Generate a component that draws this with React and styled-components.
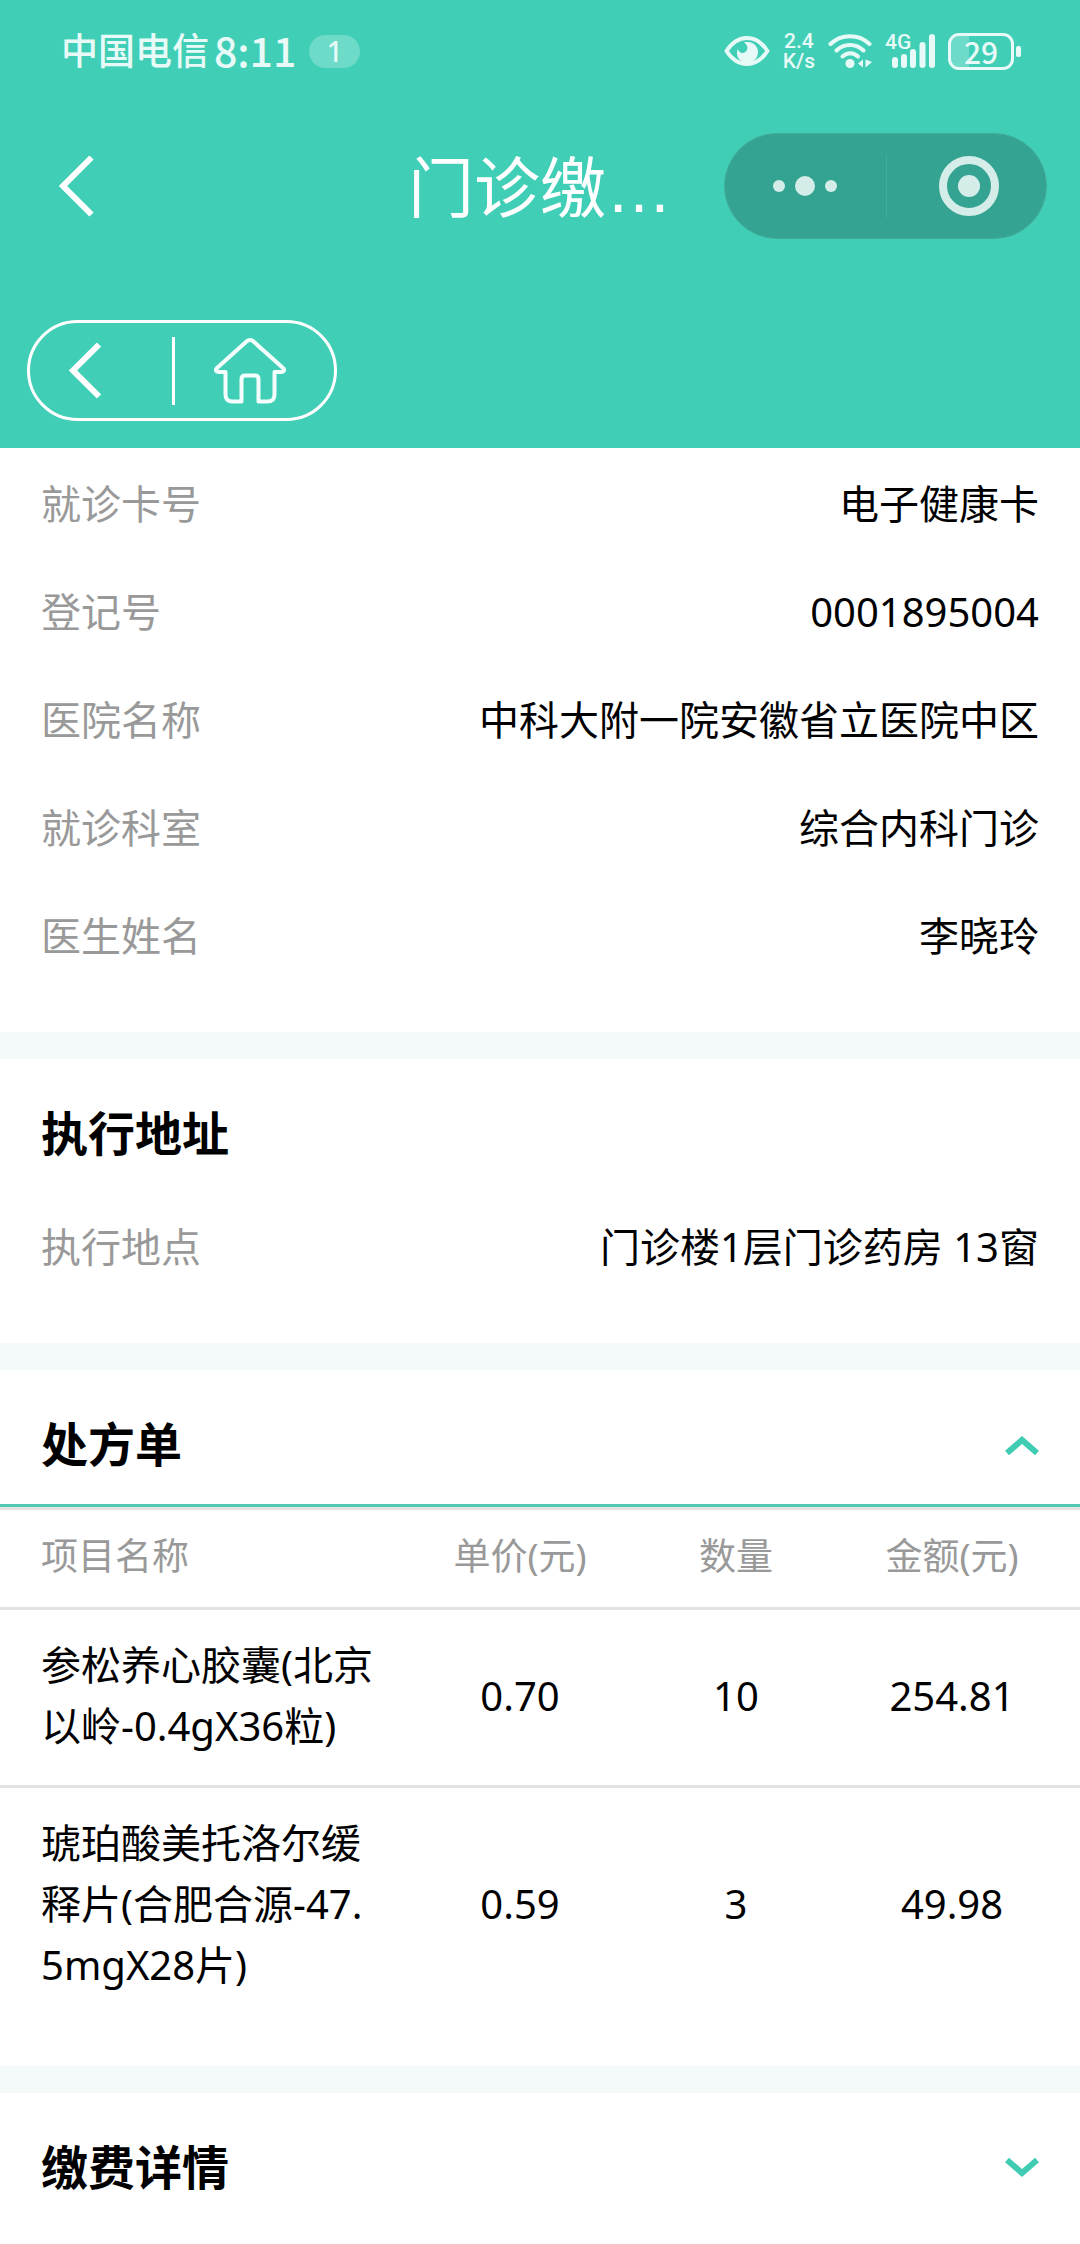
import React, {useState} from "react";
import styled, {createGlobalStyle} from "styled-components";

const datosVisita = [
    {etiqueta: "就诊卡号", valor: "电子健康卡"},
    {etiqueta: "登记号", valor: "0001895004"},
    {etiqueta: "医院名称", valor: "中科大附一院安徽省立医院中区"},
    {etiqueta: "就诊科室", valor: "综合内科门诊"},
    {etiqueta: "医生姓名", valor: "李晓玲"},
];

const medicamentos = [
    {nombre: "参松养心胶囊(北京以岭-0.4gX36粒)", precio: "0.70", cantidad: "10", importe: "254.81"},
    {nombre: "琥珀酸美托洛尔缓释片(合肥合源-47.5mgX28片)", precio: "0.59", cantidad: "3", importe: "49.98"},
];

const IconoOjo = () => (
    <svg width="46" height="32" viewBox="0 0 46 32" fill="none">
        <path d="M2.5 16C8 7.500 15 3 23 3s15 4.500 20.500 13C38 24.500 31 29 23 29S8 24.500 2.500 16z" stroke="#e8faf7" strokeWidth="4" strokeLinejoin="round"/>
        <path d="M20 7.500c8-2 14 3 14 9.500 0 6-4.500 11-10.500 11S13 23.500 13 18c0-1.500.3-2.800.8-4 1 3 3 4.300 5.200 4 3-.4 4.800-3 4.300-6-.3-2-1.500-3.500-3.300-4.500z" fill="#e8faf7"/>
    </svg>
);

const IconoWifi = () => (
    <svg width="44" height="36" viewBox="0 0 44 36" fill="none" stroke="#e8faf7" strokeWidth="4" strokeLinecap="round">
        <path d="M2.500 11C13 0.500 31 0.500 41.500 11"/>
        <path d="M8.500 17.500C16 10 28 10 35.500 17.500"/>
        <path d="M14.500 23.500C19 19 25.500 19 30 23.500"/>
        <circle cx="22" cy="30.500" r="4.500" fill="#e8faf7" stroke="none"/>
        <path d="M30 30.500l5-4v8zM37.500 26.500l6.500 2.500-6.500 5.500z" fill="#e8faf7" stroke="none"/>
    </svg>
);

const IconoSenal = () => (
    <svg width="50" height="36" viewBox="0 0 50 36" stroke="#e8faf7" strokeWidth="6" strokeLinecap="round">
        <path d="M10 27v5M19 24v8M28 19v13M37.500 12v20M47 4v28"/>
    </svg>
);

const FlechaAtras = () => (
    <svg width="36" height="62" viewBox="0 0 36 62" fill="none" stroke="#fff" strokeWidth="6">
        <path d="M32.500 2.500L4 31l28.500 28.500"/>
    </svg>
);

const FlechaAnterior = () => (
    <svg width="32" height="57" viewBox="0 0 32 57" fill="none" stroke="#fff" strokeWidth="6">
        <path d="M30 2.500L4 28.500l26 26"/>
    </svg>
);

const IconoCasa = () => (
    <svg width="72" height="66" viewBox="0 0 72 66" fill="none" stroke="#f4fffd" strokeWidth="4" strokeLinejoin="round">
        <path d="M32.500 3.500a5 5 0 0 1 7 0L69 30c2 2 1 4-1.500 4H60.500v22.500q0 7-7 7H44.500V41q0-3.500-3.500-3.500H31q-3.500 0-3.500 3.500v22.500H18.500q-7 0-7-7V34H4.500C2 34 1 32 3 30z"/>
    </svg>
);

const Chevron = ({abierto}) => (
    <svg width="34" height="22" viewBox="0 0 34 22" fill="none" stroke="#40cbb3" strokeWidth="6">
        <path d={abierto ? "M2 20L17 7l15 13" : "M2 4l15 13L32 4"}/>
    </svg>
);

const Fila = ({etiqueta, valor}) => (
    <FilaDato>
        <dt>{etiqueta}</dt>
        <dd>{valor}</dd>
    </FilaDato>
);

const App = () => {
    const [recetaAbierta, cambiarReceta] = useState(true);
    const [pagoAbierto, cambiarPago] = useState(false);

    return(
        <>
            <EstiloGlobal/>
            <Cabecera>
                <BarraEstado>
                    <GrupoEstado>
                        <Operador>中国电信</Operador>
                        <Hora>8:11</Hora>
                        <Insignia>1</Insignia>
                    </GrupoEstado>
                    <GrupoEstado>
                        <IconoOjo/>
                        <Velocidad>
                            <span>2.4</span>
                            <span>K/s</span>
                        </Velocidad>
                        <IconoWifi/>
                        <Senal>
                            <IconoSenal/>
                            <TipoRed>4G</TipoRed>
                        </Senal>
                        <Bateria>29</Bateria>
                    </GrupoEstado>
                </BarraEstado>
                <BarraTitulo>
                    <BotonAtras aria-label="返回">
                        <FlechaAtras/>
                    </BotonAtras>
                    <h1>门诊缴…</h1>
                    <Capsula>
                        <button aria-label="更多">
                            <svg width="64" height="64" viewBox="0 0 64 64" fill="#d5ede8">
                                <circle cx="6" cy="32" r="6"/>
                                <circle cx="32" cy="32" r="10"/>
                                <circle cx="58" cy="32" r="6"/>
                            </svg>
                        </button>
                        <button aria-label="关闭">
                            <svg width="60" height="60" viewBox="0 0 60 60">
                                <circle cx="30" cy="30" r="26" fill="none" stroke="#d5ede8" strokeWidth="8"/>
                                <circle cx="30" cy="30" r="11" fill="#d5ede8"/>
                            </svg>
                        </button>
                    </Capsula>
                </BarraTitulo>
                <BarraNavegacion>
                    <Pildora>
                        <button aria-label="上一页">
                            <FlechaAnterior/>
                        </button>
                        <Separador/>
                        <button aria-label="首页">
                            <IconoCasa/>
                        </button>
                    </Pildora>
                </BarraNavegacion>
            </Cabecera>
            <main>
                <Seccion>
                    <Lista>
                        {datosVisita.map((dato) => <Fila key={dato.etiqueta} {...dato}/>)}
                    </Lista>
                </Seccion>
                <Seccion>
                    <Encabezado>
                        <h2>执行地址</h2>
                    </Encabezado>
                    <Lista>
                        <Fila etiqueta="执行地点" valor="门诊楼1层门诊药房 13窗"/>
                    </Lista>
                </Seccion>
                <Seccion>
                    <Encabezado $linea={recetaAbierta}>
                        <h2>处方单</h2>
                        <BotonPlegar
                            aria-label="处方单"
                            aria-expanded={recetaAbierta}
                            onClick={()=>cambiarReceta(!recetaAbierta)}
                        >
                            <Chevron abierto={recetaAbierta}/>
                        </BotonPlegar>
                    </Encabezado>
                    {recetaAbierta && (
                        <Tabla>
                            <thead>
                                <tr>
                                    <th>项目名称</th>
                                    <th>单价(元)</th>
                                    <th>数量</th>
                                    <th>金额(元)</th>
                                </tr>
                            </thead>
                            <tbody>
                                {medicamentos.map((m) => (
                                    <tr key={m.nombre}>
                                        <td>{m.nombre}</td>
                                        <td>{m.precio}</td>
                                        <td>{m.cantidad}</td>
                                        <td>{m.importe}</td>
                                    </tr>
                                ))}
                            </tbody>
                        </Tabla>
                    )}
                </Seccion>
                <Seccion>
                    <Encabezado>
                        <h2>缴费详情</h2>
                        <BotonPlegar
                            aria-label="缴费详情"
                            aria-expanded={pagoAbierto}
                            onClick={()=>cambiarPago(!pagoAbierto)}
                        >
                            <Chevron abierto={pagoAbierto}/>
                        </BotonPlegar>
                    </Encabezado>
                </Seccion>
            </main>
        </>
    );
}
export default App;

const EstiloGlobal = createGlobalStyle`
    *{
        box-sizing: border-box;
    }

    body{
        margin: 0;
        background: #fff;
        color: #000;
        font-family: "Noto Sans", "Noto Sans CJK SC", sans-serif;
        font-size: 40px;
    }

    h1, h2, dl, dd{
        margin: 0;
    }

    button{
        display: flex;
        align-items: center;
        justify-content: center;
        padding: 0;
        border: 0;
        background: none;
        cursor: pointer;
    }

    svg{
        display: block;
        flex: none;
    }
`;
const Cabecera = styled.header`
    background: #40cfb6;
    color: #fff;
`;
const BarraEstado = styled.div`
    display: flex;
    align-items: center;
    justify-content: space-between;
    height: 102px;
    padding: 0 66px 0 61px;
    color: #e8faf7;
`;
const GrupoEstado = styled.div`
    display: flex;
    align-items: center;
    gap: 13px;
`;
const Operador = styled.span`
    margin-right: -8px;
    padding-bottom: 4px;
    font-family: "Noto Sans CJK SC", sans-serif;
    font-size: 37px;
    font-weight: 500;
    line-height: 48px;
`;
const Hora = styled.span`
    padding-bottom: 4px;
    font-family: "Noto Sans CJK SC", sans-serif;
    font-size: 41px;
    font-weight: 500;
    line-height: 48px;
`;
const Insignia = styled.span`
    width: 51px;
    border-radius: 17px;
    background: #6edac8;
    font-size: 28px;
    font-weight: 500;
    line-height: 33px;
    text-align: center;
`;
const Velocidad = styled.span`
    display: flex;
    flex-direction: column;
    align-items: center;
    font-family: Roboto, sans-serif;
    font-size: 21px;
    font-weight: 500;
    line-height: 20px;
`;
const Senal = styled.span`
    position: relative;
`;
const TipoRed = styled.span`
    position: absolute;
    top: 0;
    left: 0;
    font-family: Roboto, sans-serif;
    font-size: 21px;
    font-weight: 500;
    line-height: 18px;
`;
const Bateria = styled.span`
    position: relative;
    width: 66px;
    border: 3px solid #e8faf7;
    border-radius: 11px;
    background: linear-gradient(90deg, #6edac8 30%, transparent 30%);
    font-family: "Noto Sans CJK SC", sans-serif;
    font-size: 30px;
    font-weight: 500;
    line-height: 31px;
    text-align: center;

    &::after{
        content: "";
        position: absolute;
        top: 10px;
        right: -10px;
        width: 5px;
        height: 11px;
        border-radius: 2px;
        background: #e8faf7;
    }
`;
const BarraTitulo = styled.div`
    display: grid;
    grid-template-columns: 1fr auto 1fr;
    align-items: center;
    height: 168px;
    padding: 0 33px;

    h1{
        padding-top: 5px;
        font-family: "Liberation Sans", "Noto Sans CJK SC", sans-serif;
        font-size: 66px;
        font-weight: 400;
        line-height: 96px;
    }
`;
const BotonAtras = styled.button`
    width: 88px;
    height: 96px;
`;
const Capsula = styled.div`
    display: flex;
    justify-self: end;
    width: 323px;
    height: 106px;
    padding: 20px 0;
    border: 1px solid #43ad9c;
    border-radius: 53px;
    background: #34a391;

    button{
        width: 50%;
    }

    button + button{
        padding-left: 6px;
        border-left: 1px solid #43ad9c;
    }
`;
const BarraNavegacion = styled.nav`
    padding: 50px 27px 27px;
`;
const Pildora = styled.div`
    display: flex;
    align-items: center;
    width: 310px;
    height: 101px;
    border: 3px solid #fff;
    border-radius: 51px;

    button{
        height: 95px;
    }

    button:first-child{
        width: 142px;
        padding-right: 32px;
    }

    button:last-child{
        flex: 1;
        padding-right: 10px;
    }
`;
const Separador = styled.span`
    width: 3px;
    height: 68px;
    background: #fff;
`;
const Seccion = styled.section`
    & + &{
        border-top: 27px solid #f4f9f9;
    }
`;
const Lista = styled.dl`
    padding: 0 41px 42px;

    ${Seccion}:first-child &{
        padding-top: 2px;
    }
`;
const FilaDato = styled.div`
    display: flex;
    align-items: center;
    justify-content: space-between;
    height: 108px;
    line-height: 60px;

    dt{
        color: #999;
    }
`;
const Encabezado = styled.div`
    display: flex;
    align-items: center;
    justify-content: space-between;
    padding: 42px 41px 28px;
    border-bottom: ${({$linea}) => $linea ? "3px solid #52c9b3" : "0"};

    h2{
        font-size: 47px;
        font-weight: 700;
        line-height: 64px;
    }
`;
const BotonPlegar = styled.button`
    height: 64px;
`;
const Tabla = styled.table`
    width: 100%;
    padding-bottom: 42px;
    border-top: 3px solid #e3e3e3;
    border-spacing: 0;
    table-layout: fixed;

    th, td{
        width: 216px;
        padding: 24px 0 29px;
        line-height: 61px;
        text-align: center;
    }

    th{
        padding: 15px 0 21px;
        border-bottom: 3px solid #e3e3e3;
        color: #999;
        font-size: 37px;
        font-weight: 400;
    }

    th:first-child, td:first-child{
        width: auto;
        padding-left: 41px;
        padding-right: 30px;
        text-align: left;
        word-break: break-all;
    }

    th:last-child, td:last-child{
        width: 236px;
        padding-right: 20px;
    }

    tr:not(:last-child) td{
        border-bottom: 3px solid #e3e3e3;
    }
`;
